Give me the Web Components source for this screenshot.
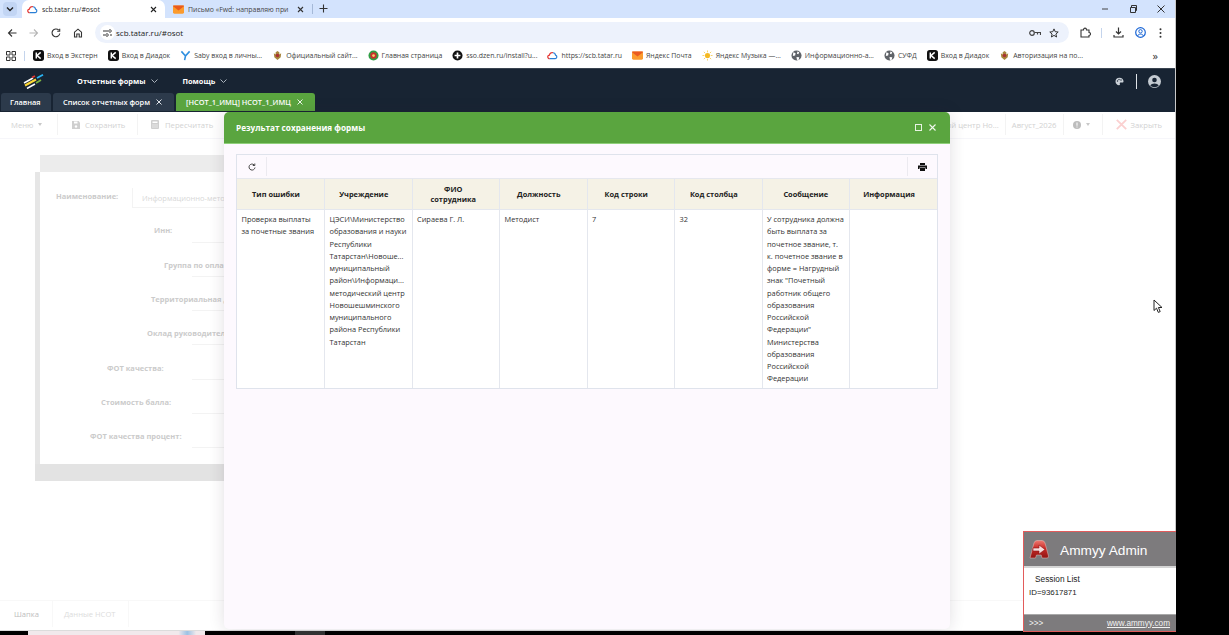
<!DOCTYPE html>
<html lang="ru">
<head>
<meta charset="utf-8">
<title>scb.tatar.ru/#osot</title>
<style>
  html, body { margin: 0; height: 100%; background: #000; overflow: hidden; }
  body { font-family: "Open Sans", "Liberation Sans", sans-serif; }
</style>
</head>
<body>
<x-desktop>
  <x-browser-tabs></x-browser-tabs>
  <x-browser-toolbar></x-browser-toolbar>
  <x-bookmarks>
    <x-bookmark icon="k">Вход в Экстерн</x-bookmark>
    <x-bookmark icon="k">Вход в Диадок</x-bookmark>
    <x-bookmark icon="saby">Saby вход в личны...</x-bookmark>
    <x-bookmark icon="emblem">Официальный сайт...</x-bookmark>
    <x-bookmark icon="round">Главная страница</x-bookmark>
    <x-bookmark icon="plus">sso.dzen.ru/install?u...</x-bookmark>
    <x-bookmark icon="cloud">https://scb.tatar.ru</x-bookmark>
    <x-bookmark icon="mail">Яндекс Почта</x-bookmark>
    <x-bookmark icon="sun">Яндекс Музыка —...</x-bookmark>
    <x-bookmark icon="globe">Информационно-а...</x-bookmark>
    <x-bookmark icon="globe">СУФД</x-bookmark>
    <x-bookmark icon="k">Вход в Диадок</x-bookmark>
    <x-bookmark icon="emblem">Авторизация на по...</x-bookmark>
  </x-bookmarks>
  <x-app-header></x-app-header>
  <x-app-tabs></x-app-tabs>
  <x-app-toolbar></x-app-toolbar>
  <x-form-panel></x-form-panel>
  <x-bottom-tabs></x-bottom-tabs>
  <x-result-modal title="Результат сохранения формы">
    <x-result-table></x-result-table>
  </x-result-modal>
  <x-ammyy-panel></x-ammyy-panel>
</x-desktop>

<script>
/*
 * Favicons of the bookmarks bar and the browser tabs.
 */
const ICONS = {
  k: '<svg viewBox="0 0 12 12"><rect width="12" height="12" rx="3" fill="#111"/><path d="M3.6 2.6v6.8M8.4 2.6 4.4 6l4 3.4" fill="none" stroke="#fff" stroke-width="1.6"/></svg>',
  saby: '<svg viewBox="0 0 12 12"><path d="M1.5 1.5 6 6.5M10.5 1.5 6 6.5 5 11" fill="none" stroke="#2e8fe0" stroke-width="1.7"/></svg>',
  emblem: '<svg viewBox="0 0 12 12"><path d="M2 3.500 4 5V2.500L6 1l2 1.500V5l2-1.500L9.500 8 6 11 2.500 8z" fill="#a8863c"/><circle cx="6" cy="6" r="2" fill="#a33"/></svg>',
  round: '<svg viewBox="0 0 12 12"><circle cx="6" cy="6" r="5.500" fill="#2f9e44"/><circle cx="6" cy="6" r="3.500" fill="#c9302c"/><circle cx="6" cy="6" r="1.500" fill="#f2d16b"/></svg>',
  plus: '<svg viewBox="0 0 12 12"><circle cx="6" cy="6" r="5.500" fill="#111"/><path d="M6 2.800v6.400M2.800 6h6.400" stroke="#fff" stroke-width="1.800"/></svg>',
  cloud: '<svg viewBox="0 0 12 12"><path d="M3 9.500a2 2 0 0 1-.3-4A3 3 0 0 1 6.500 3" fill="none" stroke="#e5322d" stroke-width="1.300"/><path d="M6.500 3a3 3 0 0 1 2.800 2.600A2 2 0 0 1 9 9.500H3" fill="none" stroke="#2a7fd5" stroke-width="1.300"/></svg>',
  mail: '<svg viewBox="0 0 12 12"><rect y="1.500" width="12" height="9" rx="1.500" fill="#fb9b2d"/><path d="M0 2.500 6 7l6-4.500V2a.5.5 0 0 0-.5-.5H.5A.5.5 0 0 0 0 2z" fill="#ea5a1e"/></svg>',
  sun: '<svg viewBox="0 0 12 12"><circle cx="6" cy="6" r="2.800" fill="#f5b921"/><path d="M6 .5v2M6 9.500v2M.5 6h2M9.500 6h2M2 2l1.500 1.500M8.500 8.500 10 10M2 10l1.500-1.500M8.500 3.500 10 2" stroke="#f7cf5c"/></svg>',
  globe: '<svg viewBox="0 0 12 12"><circle cx="6" cy="6" r="5.500" fill="#5f6368"/><path d="M2.500 2.500 5 3.500 4.500 6 2 6.500M7 1.500l2 1-1 2-1.500-.5zM6 7.500l3 .5-.5 2.500-2 .5z" fill="#fff"/></svg>'
}

/*
 * Registers an element whose shadow root is a fixed piece of markup.
 */
function defineStatic (name, html) {
  const template = document.createElement('template')
  template.innerHTML = html
  customElements.define(name, class extends HTMLElement {
    constructor () {
      super()
      this.attachShadow({ mode: 'open' }).appendChild(template.content.cloneNode(true))
    }
  })
}

defineStatic('x-desktop', `
  <style>
    :host { display: block; position: relative; width: 1229px; height: 635px; background: #000; overflow: hidden; }
    #window { display: flex; flex-direction: column; width: 1175px; height: 630px; background: #fff; border-right: 1px solid #c9c9c9; border-bottom: 1px solid #dcdcdc; }
    #taskbar { display: flex; height: 4px; }
    #taskbar i:nth-child(1) { margin-left: 28px; width: 177px; background: linear-gradient(90deg, #f1e9ec 85%, #9cc2e4 90%, #f1e9ec 95%); }
    #taskbar i:nth-child(2) { margin-left: 90px; width: 30px; background: #333; }
    #pointer { position: absolute; left: 1153px; top: 299px; }
  </style>
  <div id="window"><slot></slot></div>
  <div id="taskbar"><i></i><i></i></div>
  <svg id="pointer" width="10" height="15" viewBox="0 0 10 15"><path d="M1 1v10.500l2.500-2.300 1.800 4.200 1.900-.8-1.800-4.100H9z" fill="#fff" stroke="#222"/></svg>
`)

defineStatic('x-browser-tabs', `
  <style>
    :host { display: flex; align-items: stretch; height: 18px; flex: none; background: #d3e3fd; font-size: 6.900px; color: #1f1f1f; white-space: nowrap; }
    #list { display: flex; align-items: center; justify-content: center; width: 14px; height: 14px; margin: 2px 5px 0 3px; background: #c2d5f4; border-radius: 4px; }
    .tab { display: flex; align-items: center; box-sizing: border-box; }
    #active { width: 143px; padding: 0 5px; background: #fff; border-radius: 7px 7px 0 0; }
    #other { width: 147px; padding: 0 5px 0 8px; }
    .title { flex: 1; margin-left: 4px; overflow: hidden; }
    #other .title { color: #474747; }
    .close { margin-right: 3px; }
    #sep { align-self: center; width: 1px; height: 10px; background: #a5b9d8; }
    #plus { margin: 4px 0 0 6px; }
    #controls { display: flex; align-items: center; gap: 20px; margin-left: auto; padding-right: 10px; }
  </style>
  <div id="list"><svg width="8" height="6" viewBox="0 0 8 6"><path d="M1 1.500 4 4.500l3-3" fill="none" stroke="#222" stroke-width="1.400"/></svg></div>
  <div class="tab" id="active">
    <svg width="11" height="11" viewBox="0 0 12 12"><path d="M3 9.500a2 2 0 0 1-.3-4A3 3 0 0 1 6.500 3" fill="none" stroke="#e5322d" stroke-width="1.300"/><path d="M6.500 3a3 3 0 0 1 2.800 2.600A2 2 0 0 1 9 9.500H3" fill="none" stroke="#2a7fd5" stroke-width="1.300"/></svg>
    <span class="title">scb.tatar.ru/#osot</span>
    <svg class="close" width="7" height="7" viewBox="0 0 7 7"><path d="M1 1l5 5M6 1 1 6" stroke="#222" stroke-width="1.100"/></svg>
  </div>
  <div class="tab" id="other">
    <svg width="11" height="11" viewBox="0 0 12 12"><rect y="1.500" width="12" height="9" rx="1.500" fill="#fb9b2d"/><path d="M0 2.500 6 7l6-4.500V2a.5.5 0 0 0-.5-.5H.5A.5.5 0 0 0 0 2z" fill="#ea5a1e"/></svg>
    <span class="title">Письмо «Fwd: направляю при</span>
    <svg class="close" width="7" height="7" viewBox="0 0 7 7"><path d="M1 1l5 5M6 1 1 6" stroke="#333" stroke-width="1.100"/></svg>
  </div>
  <div id="sep"></div>
  <svg id="plus" width="9" height="9" viewBox="0 0 9 9"><path d="M4.500 .5v8M.5 4.500h8" stroke="#333" stroke-width="1.100"/></svg>
  <div id="controls">
    <svg width="8" height="8" viewBox="0 0 8 8"><path d="M1 4h6" stroke="#444"/></svg>
    <svg width="8" height="8" viewBox="0 0 8 8"><path d="M1.500 2.500h5v5h-5zM2.500 2.500v-2h5v5h-1" fill="none" stroke="#333"/></svg>
    <svg width="8" height="8" viewBox="0 0 8 8"><path d="M.5.5l7 7M7.500.5l-7 7" stroke="#333"/></svg>
  </div>
`)

defineStatic('x-browser-toolbar', `
  <style>
    :host { display: flex; align-items: center; height: 25px; flex: none; box-sizing: border-box; padding-top: 4px; background: #fff; color: #333; font-size: 8px; }
    svg { flex: none; }
    #nav { display: flex; align-items: center; gap: 12px; padding-left: 7px; width: 95px; box-sizing: border-box; }
    #omnibox { display: flex; align-items: center; width: 974px; height: 21px; box-sizing: border-box; padding: 0 10px 0 5px; background: #edf2fc; border-radius: 11px; }
    #tune { display: flex; align-items: center; justify-content: center; width: 15px; height: 15px; background: #fff; border-radius: 50%; margin-right: 1px; }
    #url { flex: 1; color: #222; }
    #key { margin-right: 8px; }
    #actions { display: flex; align-items: center; padding-left: 11px; }
    #line { width: 1px; height: 10px; background: #c4d4ec; margin: 0 11px 0 10px; }
  </style>
  <div id="nav">
    <svg width="10" height="10" viewBox="0 0 10 10"><path d="M9.500 5H1.500M5 1.500 1.500 5 5 8.500" fill="none" stroke="#333" stroke-width="1.100"/></svg>
    <svg width="10" height="10" viewBox="0 0 10 10"><path d="M.5 5h8M5 1.500 8.500 5 5 8.500" fill="none" stroke="#b5b5b5" stroke-width="1.100"/></svg>
    <svg width="10" height="10" viewBox="0 0 10 10"><path d="M8.800 5.500A3.900 3.900 0 1 1 7.800 2.200M8.700.8v2.500H6.200" fill="none" stroke="#333" stroke-width="1.100"/></svg>
    <svg width="10" height="10" viewBox="0 0 10 10"><path d="M1.500 9V4.200L5 1.200l3.500 3V9H6.200V6H3.800v3z" fill="none" stroke="#333" stroke-width="1.100"/></svg>
  </div>
  <div id="omnibox">
    <span id="tune"><svg width="9" height="8" viewBox="0 0 9 8"><path d="M0 2h5M0 6h2M7 6h2" stroke="#333"/><circle cx="7" cy="2" r="1.300" fill="none" stroke="#333" stroke-width=".8"/><circle cx="4" cy="6" r="1.300" fill="none" stroke="#333" stroke-width=".8"/></svg></span>
    <span id="url">scb.tatar.ru/#osot</span>
    <svg id="key" width="12" height="8" viewBox="0 0 12 8"><circle cx="3" cy="4" r="2.300" fill="none" stroke="#444" stroke-width="1.200"/><path d="M5.500 3.500h6v2.500M8.500 3.500v2" fill="none" stroke="#444" stroke-width="1.200"/></svg>
    <svg width="10" height="10" viewBox="0 0 10 10"><path d="M5 .9 6.200 3.700l3 .3-2.300 2 .7 3L5 7.400 2.400 9l.7-3L.8 4l3-.3z" fill="none" stroke="#333"/></svg>
  </div>
  <div id="actions">
    <svg width="11" height="11" viewBox="0 0 11 11"><path d="M1 3h2.500c0-2.500 3-2.500 3 0H9v2.500c2 0 2 3 0 3V10H1z" fill="none" stroke="#333" stroke-width="1.100"/></svg>
    <div id="line"></div>
    <svg width="11" height="11" viewBox="0 0 11 11" style="margin-right:11px"><path d="M5.500 .5v6M3 4.500l2.500 2.500L8 4.500M1 8v2h9V8" fill="none" stroke="#333" stroke-width="1.200"/></svg>
    <svg width="11" height="11" viewBox="0 0 11 11" style="margin-right:13px"><circle cx="5.500" cy="5.500" r="4.800" fill="none" stroke="#1a66d6" stroke-width="1.200"/><circle cx="5.500" cy="4.300" r="1.700" fill="none" stroke="#1a66d6"/><path d="M2.500 9c1-2.500 5-2.500 6 0" fill="none" stroke="#1a66d6"/></svg>
    <svg width="3" height="10" viewBox="0 0 3 10"><circle cx="1.500" cy="1.200" r="1" fill="#333"/><circle cx="1.500" cy="5" r="1" fill="#333"/><circle cx="1.500" cy="8.800" r="1" fill="#333"/></svg>
  </div>
`)

defineStatic('x-bookmarks', `
  <style>
    :host { display: flex; align-items: center; height: 25px; flex: none; box-sizing: border-box; padding-left: 6px; background: #fff; white-space: nowrap; font-size: 6.920px; color: #444; }
    #apps { flex: none; }
    #sep { width: 1px; height: 10px; margin: 0 8px; background: #c4d4ec; }
    #items { display: flex; gap: 10px; flex: 1; }
    #more { padding-right: 17px; font-size: 11px; color: #333; line-height: 1; }
  </style>
  <svg id="apps" width="10" height="10" viewBox="0 0 10 10"><path d="M.5.5h3.500v3.500H.5zM6 .5h3.500v3.500H6zM.5 6h3.500v3.500H.5zM6 6h3.500v3.500H6z" fill="none" stroke="#333"/></svg>
  <div id="sep"></div>
  <div id="items"><slot></slot></div>
  <div id="more">»</div>
`)

/*
 * One bookmark: a favicon picked by the icon attribute, and its slotted label.
 */
const bookmarkTemplate = document.createElement('template')
bookmarkTemplate.innerHTML = `
  <style>
    :host { display: flex; align-items: center; gap: 3px; }
    #icon { width: 11px; height: 11px; flex: none; }
    #icon svg { display: block; width: 11px; height: 11px; }
  </style>
  <span id="icon"></span><slot></slot>
`
customElements.define('x-bookmark', class extends HTMLElement {
  /**
   * Creates the shadow root and puts the favicon in it.
   */
  constructor () {
    super()
    this.attachShadow({ mode: 'open' }).appendChild(bookmarkTemplate.content.cloneNode(true))
    this.shadowRoot.querySelector('#icon').innerHTML = ICONS[this.getAttribute('icon')] || ''
  }
})

defineStatic('x-app-header', `
  <style>
    :host { display: flex; align-items: center; height: 25px; flex: none; box-sizing: border-box; background: #182433; border-top: 1px solid #3a4450; color: #fff; font-size: 7.400px; font-weight: 700; white-space: nowrap; }
    #logo { margin: 0 33px 0 23px; }
    .menu { display: flex; align-items: center; gap: 5px; }
    .menu + .menu { margin-left: 25px; }
    #right { display: flex; align-items: center; margin-left: auto; padding-right: 14px; }
    #line { width: 1px; height: 15px; background: #dfe3e8; margin: 0 11px 0 12px; }
  </style>
  <svg id="logo" width="21" height="15" viewBox="0 0 21 15">
    <path d="M1 9 10 4" stroke="#fff" stroke-width="1.500"/>
    <path d="M9 3.500 12 2" stroke="#e53935" stroke-width="1.800"/>
    <path d="M14 4 20 .8" stroke="#29b6f6" stroke-width="1.800"/>
    <path d="M2 11.500 13 5.500" stroke="#fdd835" stroke-width="2"/>
    <path d="M13 9 18 6" stroke="#7cb342" stroke-width="1.800"/>
    <path d="M4 14.500 12 10" stroke="#fff" stroke-width="1.500"/>
  </svg>
  <div class="menu">Отчетные формы <svg width="7" height="4" viewBox="0 0 7 4"><path d="M.5.500 3.500 3.500 6.500.5" fill="none" stroke="#aab2bc"/></svg></div>
  <div class="menu">Помощь <svg width="7" height="4" viewBox="0 0 7 4"><path d="M.5.500 3.500 3.500 6.500.5" fill="none" stroke="#aab2bc"/></svg></div>
  <div id="right">
    <svg width="9" height="9" viewBox="0 0 9 9"><path d="M4.500.8C2 .8.500 2.500.5 4.500s1.600 3.700 3.500 3.700c1.200 0 1-1 .8-1.500-.2-.7.300-1.100 1-1.100h1.500c1 0 1.200-.7 1.200-1.400C8.500 2.500 6.800.8 4.500.8z" fill="#ccd2d9"/><circle cx="2.500" cy="4" r=".7" fill="#182433"/><circle cx="4" cy="2.500" r=".7" fill="#182433"/><circle cx="6" cy="3" r=".7" fill="#182433"/></svg>
    <div id="line"></div>
    <svg width="13" height="13" viewBox="0 0 13 13"><circle cx="6.500" cy="6.500" r="6.500" fill="#c5cbd2"/><circle cx="6.500" cy="5" r="2.300" fill="#182433"/><path d="M2.300 10.500c1.200-2.800 7.200-2.800 8.400 0-2 2.300-6.400 2.300-8.400 0z" fill="#182433"/></svg>
  </div>
`)

defineStatic('x-app-tabs', `
  <style>
    :host { display: flex; align-items: stretch; gap: 2px; height: 19px; flex: none; box-sizing: border-box; padding: 0 0 1px 1px; background: #182433; color: #fff; font-size: 7.400px; font-weight: 600; white-space: nowrap; }
    .tab { display: flex; align-items: center; box-sizing: border-box; height: 18px; padding: 0 12px 0 10px; background: #2c3a4b; border-radius: 3px 3px 0 0; }
    .wide { justify-content: space-between; }
    #home { width: 50px; padding: 0 0 0 9px; }
    #list { width: 121px; }
    #form { width: 139px; background: #5aa53f; }
  </style>
  <div class="tab" id="home">Главная</div>
  <div class="tab wide" id="list">Список отчетных форм <svg width="6" height="6" viewBox="0 0 6 6"><path d="M.5.500l5 5M5.500.500l-5 5" stroke="#dfe3e8"/></svg></div>
  <div class="tab wide" id="form">[НСОТ_1_ИМЦ] НСОТ_1_ИМЦ <svg width="6" height="6" viewBox="0 0 6 6"><path d="M.5.500l5 5M5.500.500l-5 5" stroke="#eef5ea"/></svg></div>
`)

defineStatic('x-app-toolbar', `
  <style>
    :host { display: flex; align-items: center; height: 27px; flex: none; box-sizing: border-box; padding-bottom: 1px; border-bottom: 1px solid #f6f6fa; color: #d2d2d2; font-size: 7.700px; white-space: nowrap; }
    .item { display: flex; align-items: center; height: 100%; gap: 5px; box-sizing: border-box; }
    .line { width: 1px; height: 21px; background: #f3f3f3; }
    .arrow { width: 0; height: 0; border: 2.500px solid transparent; border-top: 3px solid #c9c9c9; border-bottom: 0; }
    #menu { width: 57px; padding-left: 11px; }
    #save { width: 79px; padding-left: 14px; }
    #calc { padding-left: 13px; gap: 6px; }
    #right { display: flex; align-items: center; margin-left: auto; height: 100%; padding-right: 13px; }
    #period { padding: 0 6px; }
    #info { padding: 0 12px 0 9px; }
    #close { padding-left: 13px; gap: 4px; }
  </style>
  <div class="item" id="menu">Меню <i class="arrow"></i></div>
  <div class="line"></div>
  <div class="item" id="save"><svg width="8" height="8" viewBox="0 0 8 8"><path d="M0 0h6.500L8 1.500V8H0z" fill="#cfcfcf"/><path d="M2 .5h3.500v2H2z" fill="#fff"/><circle cx="4" cy="5.500" r="1.200" fill="#fff"/></svg>Сохранить</div>
  <div class="line"></div>
  <div class="item" id="calc"><svg width="8" height="9" viewBox="0 0 8 9"><rect width="8" height="9" rx="1" fill="#cfcfcf"/><path d="M1.500 1.500h5v1.500h-5zM1.500 4.500h1v1h-1zM3.500 4.500h1v1h-1zM5.500 4.500h1v1h-1zM1.500 6.500h1v1h-1zM3.500 6.500h1v1h-1zM5.500 6.500h1v1h-1z" fill="#fff"/></svg>Пересчитать</div>
  <div id="right">
    <div class="item" style="padding-right:6px">ий центр Но...</div>
    <div class="line"></div>
    <div class="item" id="period">Август_2026</div>
    <div class="line"></div>
    <div class="item" id="info"><svg width="8" height="8" viewBox="0 0 8 8"><circle cx="4" cy="4" r="4" fill="#bdbdbd"/><path d="M3.500 1.500h1v3.200h-1zM3.500 5.500h1v1h-1z" fill="#fff"/></svg><i class="arrow"></i></div>
    <div class="line"></div>
    <div class="item" id="close"><svg width="11" height="11" viewBox="0 0 11 11"><path d="M.8.800l9.400 9.400M10.200.800.800 10.200" stroke="#fbd0d0" stroke-width="1.800"/></svg>Закрыть</div>
  </div>
`)

/*
 * The form behind the modal, shown faded. Each label sits at its own indent,
 * and only the part that shows beside the modal is written out.
 */
const FORM_ROWS = [
  ['Наименование:', 16, 'Информационно-метод', 132],
  ['Инн:', 114, '', 192],
  ['Группа по опла', 124, '', 192],
  ['Территориальная д', 111, '', 192],
  ['Оклад руководител', 107, '', 192],
  ['ФОТ качества:', 67, '', 192],
  ['Стоимость балла:', 61, '', 192],
  ['ФОТ качества процент:', 50, '', 192]
]

const formTemplate = document.createElement('template')
formTemplate.innerHTML = `
  <style>
    :host { display: block; flex: 1; min-height: 0; box-sizing: border-box; padding: 16px 0 0 35px; font-size: 7.500px; white-space: nowrap; }
    #panel { width: 700px; }
    #head { height: 17px; margin-left: 5px; background: #ececec; }
    #body { height: 292px; box-sizing: border-box; padding-top: 7px; background: #fff; border-left: 5px solid #e6e6e6; }
    #foot { height: 17px; background: #e3e3e3; }
    .row { display: flex; align-items: center; height: 34.300px; position: relative; }
    .label { padding-left: var(--indent); font-weight: 700; color: #cbcbcb; }
    .field { position: absolute; left: var(--field); right: 0; bottom: 5px; height: 20px; line-height: 20px; padding-left: 9px; box-sizing: border-box; color: #d8d8d8; border-bottom: 1px solid #f3f3f3; }
    .field.first { border-left: 1px solid #f3f3f3; }
  </style>
  <div id="panel">
    <div id="head"></div>
    <div id="body"></div>
    <div id="foot"></div>
  </div>
`

customElements.define('x-form-panel', class extends HTMLElement {
  /**
   * Creates the shadow root and adds the form rows.
   */
  constructor () {
    super()
    this.attachShadow({ mode: 'open' }).appendChild(formTemplate.content.cloneNode(true))
    const body = this.shadowRoot.querySelector('#body')
    FORM_ROWS.forEach(([label, indent, value, field], i) => {
      const row = document.createElement('div')
      row.className = 'row'
      row.innerHTML = `<span class="label" style="--indent:${indent}px">${label}</span>` +
        `<span class="field${i === 0 ? ' first' : ''}" style="--field:${field - 40}px">${value}</span>`
      body.appendChild(row)
    })
  }
})

defineStatic('x-bottom-tabs', `
  <style>
    :host { display: flex; height: 30px; flex: none; box-sizing: border-box; padding-bottom: 3px; border-top: 1px solid #f8f8f8; font-size: 7.600px; color: #bdbdbd; }
    div { display: flex; align-items: center; padding: 0 13px 0 14px; border-right: 1px solid #f8f8f8; }
    #rest { color: #dcdcdc; padding-left: 11px; }
  </style>
  <div>Шапка</div>
  <div id="rest">Данные НСОТ</div>
`)

const modalTemplate = document.createElement('template')
modalTemplate.innerHTML = `
  <style>
    :host { display: flex; flex-direction: column; position: absolute; left: 224px; top: 112px; width: 726px; height: 517px; background: #fdf9fe; border-radius: 5px; box-shadow: 0 0 16px rgba(40, 30, 50, .14); }
    header { display: flex; align-items: center; height: 32px; flex: none; box-sizing: border-box; padding: 0 14px 0 12px; gap: 7px; background: #5aa53f; border-bottom: 1px solid #8fd07a; border-radius: 5px 5px 0 0; color: #fff; }
    #title { flex: 1; font-size: 8.200px; font-weight: 700; }
    #content { padding: 10px 12px; }
  </style>
  <header>
    <span id="title"></span>
    <svg width="7" height="7" viewBox="0 0 7 7"><rect x=".5" y=".5" width="6" height="6" fill="none" stroke="#e8f3e3"/></svg>
    <svg width="7" height="7" viewBox="0 0 7 7"><path d="M.5.500l6 6M6.500.500l-6 6" stroke="#f2f8ef" stroke-width="1.100"/></svg>
  </header>
  <div id="content"><slot></slot></div>
`

customElements.define('x-result-modal', class extends HTMLElement {
  /**
   * Creates the shadow root and fills in the title.
   */
  constructor () {
    super()
    this.attachShadow({ mode: 'open' }).appendChild(modalTemplate.content.cloneNode(true))
    this.shadowRoot.querySelector('#title').textContent = this.getAttribute('title')
  }
})

/*
 * The result grid: header names and the single row of check results.
 */
const COLUMNS = ['Тип ошибки', 'Учреждение', 'ФИО<br>сотрудника', 'Должность', 'Код строки', 'Код столбца', 'Сообщение', 'Информация']
const ROW = [
  'Проверка выплаты<br>за почетные звания',
  'ЦЭСИ\\Министерство<br>образования и науки<br>Республики<br>Татарстан\\Новоше...<br>муниципальный<br>район\\Информаци...<br>методический центр<br>Новошешминского<br>муниципального<br>района Республики<br>Татарстан',
  'Сираева Г. Л.',
  'Методист',
  '7',
  '32',
  'У сотрудника должна<br>быть выплата за<br>почетное звание, т.<br>к. почетное звание в<br>форме = Нагрудный<br>знак "Почетный<br>работник общего<br>образования<br>Российской<br>Федерации"<br>Министерства<br>образования<br>Российской<br>Федерации',
  ''
]

const tableTemplate = document.createElement('template')
tableTemplate.innerHTML = `
  <style>
    :host { display: block; box-sizing: border-box; width: 702px; border: 1px solid #dfe3ec; font-size: 7.400px; color: #333; }
    #tools { display: flex; justify-content: space-between; height: 24px; box-sizing: border-box; padding: 2px 0; border-bottom: 1px solid #e6e8ee; }
    .tool { display: flex; align-items: center; justify-content: center; width: 29px; }
    #refresh { border-right: 1px solid #eceaf0; }
    #print { border-left: 1px solid #eceaf0; }
    table { width: 100%; table-layout: fixed; border-collapse: collapse; }
    th, td { border-right: 1px solid #e4e7ee; }
    th:last-child, td:last-child { border-right: 0; }
    th { height: 30px; padding: 0 9px 0 0; background: #f5f2e6; border-bottom: 1px solid #e4e7ee; font-weight: 700; line-height: 10px; color: #222; text-align: center; }
    th:nth-child(3) { padding-right: 5px; }
    th:nth-child(7) { padding-right: 0; }
    td { height: 175px; padding: 3px 2px 0 4.500px; background: #fff; vertical-align: top; line-height: 12.250px; white-space: nowrap; overflow: hidden; }
  </style>
  <div id="tools">
    <div class="tool" id="refresh"><svg width="8" height="8" viewBox="0 0 8 8"><path d="M7 4.500A3 3 0 1 1 6 1.800M6.800.5v2H4.800" fill="none" stroke="#333" stroke-width=".9"/></svg></div>
    <div class="tool" id="print"><svg width="9" height="8" viewBox="0 0 9 8"><path d="M2 0h5v2H2zM0 2.500h9V6H7.500V4.500h-6V6H0zM2 5h5v3H2z" fill="#111"/></svg></div>
  </div>
  <table><thead><tr></tr></thead><tbody><tr></tr></tbody></table>
`

customElements.define('x-result-table', class extends HTMLElement {
  /**
   * Creates the shadow root and renders the header and the row.
   */
  constructor () {
    super()
    this.attachShadow({ mode: 'open' }).appendChild(tableTemplate.content.cloneNode(true))
    this.shadowRoot.querySelector('thead tr').innerHTML = COLUMNS.map(name => `<th>${name}</th>`).join('')
    this.shadowRoot.querySelector('tbody tr').innerHTML = ROW.map(cell => `<td>${cell}</td>`).join('')
  }
})

defineStatic('x-ammyy-panel', `
  <style>
    :host { display: flex; flex-direction: column; position: absolute; left: 1023px; top: 531px; width: 153px; height: 101px; box-sizing: border-box; background: #fff; border: 1px solid #e25b5b; border-right: 0; font-family: "Liberation Sans", Arial, sans-serif; color: #222; }
    #head { display: flex; align-items: center; height: 34px; flex: none; box-sizing: content-box; padding-left: 5px; gap: 11px; background: #7d7b7d; border-bottom: 2px solid #d5d5d5; color: #fff; font-size: 13.700px; }
    #head svg { flex: none; }
    #name { padding-top: 2px; }
    #body { flex: 1; font-size: 7.900px; padding: 5px 0 0 5px; line-height: 13px; }
    #session { padding-left: 6px; font-size: 8.300px; }
    #foot { display: flex; justify-content: space-between; align-items: center; height: 16px; flex: none; padding: 0 6px 0 5px; background: #7d7b7d; border-top: 1px solid #a9a9a9; color: #f2f2f2; font-size: 8.200px; }
  </style>
  <div id="head">
    <svg width="20" height="19" viewBox="0 0 20 19">
      <defs><linearGradient id="red" x1="0" y1="0" x2="0" y2="1"><stop offset="0" stop-color="#ee7a72"/><stop offset=".45" stop-color="#c92a26"/><stop offset="1" stop-color="#8f1614"/></linearGradient></defs>
      <path d="M1 18 5 3q.7-2.500 3-2.500h5q2.300 0 3 2.500l3.500 13q.3 2-1.500 2H13l-.8-3H7.500l-1 3z" fill="url(#red)" stroke="#e8c0bd" stroke-width=".5"/>
      <path d="M4 8h6V5l6 4.500-6 4.500v-3H4z" fill="#f6dcdc" stroke="#8f1614" stroke-width=".6"/>
    </svg>
    <span id="name">Ammyy Admin</span>
  </div>
  <div id="body">
    <div id="session">Session List</div>
    <div>ID=93617871</div>
  </div>
  <div id="foot"><span>&gt;&gt;&gt;</span><u>www.ammyy.com</u></div>
`)
</script>
</body>
</html>
